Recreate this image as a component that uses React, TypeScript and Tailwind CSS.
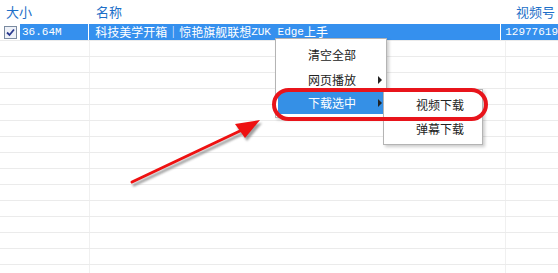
import React from 'react';

const cjk = { fontFamily: '"SimSun", "Noto Sans CJK SC", sans-serif' };
const mono = { fontFamily: '"Liberation Mono", "DejaVu Sans Mono", monospace' };

function Row({ first }: { first?: boolean }) {
  return (
    <div className={`flex h-[16px] ${first ? '' : 'border-t border-[#ebebeb]'}`}>
      <div className="w-[90px] border-r border-[#f0f0f0]" />
      <div className="w-[416px] border-r border-[#f0f0f0]" />
      <div className="flex-1" />
    </div>
  );
}

export default function App() {
  const empty = Array.from({ length: 15 });
  return (
    <div className="relative w-[558px] h-[273px] overflow-hidden bg-white text-[12px]" style={cjk}>
      {/* header */}
      <div className="flex h-[24px] items-center text-[13px] text-[#1d6fc8]">
        <div className="w-[90px] pl-[6px]">大小</div>
        <div className="w-[416px] pl-[6px]">名称</div>
        <div className="flex-1 pl-[10px]">视频号</div>
      </div>

      {/* selected row */}
      <div className="flex h-[16px] items-center text-white">
        <div className="flex w-[90px] items-center border-r border-white">
          <div className="ml-[4px] mr-[3px] flex h-[13px] w-[13px] items-center justify-center border border-[#7a8aa0] bg-[#eef1f8]">
            <svg width="9" height="9" viewBox="0 0 9 9">
              <path d="M1 4.5 L3.5 7 L8 1.5" fill="none" stroke="#2a3a8f" strokeWidth="1.8" />
            </svg>
          </div>
          <div className="flex h-[16px] flex-1 items-center bg-[#3590ee] pl-[2px] text-[11px]" style={mono}>36.64M</div>
        </div>
        <div className="flex h-[16px] w-[416px] items-center border-r border-white bg-[#3590ee] pl-[6px] whitespace-nowrap">
          科技美学开箱｜惊艳旗舰联想<span style={mono} className="text-[11px]">ZUK Edge</span>上手
        </div>
        <div className="flex h-[16px] flex-1 items-center bg-[#3590ee] pl-[4px] text-[11px] whitespace-nowrap" style={mono}>
          12977619
        </div>
      </div>

      {/* empty rows */}
      {empty.map((_, i) => (
        <Row key={i} />
      ))}

      {/* context menu */}
      <div className="absolute left-[275px] top-[38px] w-[112px] border border-[#b4b4b4] bg-white py-[3px] shadow-[2px_2px_3px_rgba(0,0,0,0.2)]">
        <div className="flex h-[25px] items-center pl-[32px] text-[#222]">清空全部</div>
        <div className="relative flex h-[25px] items-center pl-[32px] text-[#222]">
          网页播放
          <span className="absolute right-[4px] top-[9px] h-0 w-0 border-y-[4px] border-l-[4px] border-y-transparent border-l-[#222]" />
        </div>
        <div className="relative mx-[2px] flex h-[22px] items-center bg-[#3590e6] pl-[30px] text-white">
          下载选中
          <span className="absolute right-[2px] top-[7px] h-0 w-0 border-y-[4px] border-l-[4px] border-y-transparent border-l-[#222]" />
        </div>
      </div>

      {/* submenu */}
      <div className="absolute left-[383px] top-[89px] w-[100px] border border-[#b4b4b4] bg-white py-[3px] shadow-[2px_2px_3px_rgba(0,0,0,0.2)]">
        <div className="flex h-[24px] items-center pl-[32px] text-[#222]">视频下载</div>
        <div className="flex h-[24px] items-center pl-[32px] text-[#222]">弹幕下载</div>
      </div>

      {/* red highlight ring */}
      <div className="absolute left-[272px] top-[88px] h-[33px] w-[216px] rounded-full border-[4px] border-[#e8141b]" />

      {/* arrow */}
      <svg className="absolute left-0 top-0" width="558" height="273" viewBox="0 0 558 273">
        <defs>
          <filter id="sh" x="-20%" y="-20%" width="140%" height="140%">
            <feGaussianBlur stdDeviation="1.2" />
          </filter>
        </defs>
        <g transform="translate(2,3)" opacity="0.5" filter="url(#sh)">
          <line x1="132" y1="182" x2="242" y2="130" stroke="#444" strokeWidth="3" strokeLinecap="round" />
          <path d="M260 120 L235 124 L245 138 Z" fill="#444" />
        </g>
        <line x1="132" y1="182" x2="242" y2="130" stroke="#ee1111" strokeWidth="3" strokeLinecap="round" />
        <path d="M260 120 L235 124 L245 138 Z" fill="#ee1111" />
      </svg>
    </div>
  );
}
